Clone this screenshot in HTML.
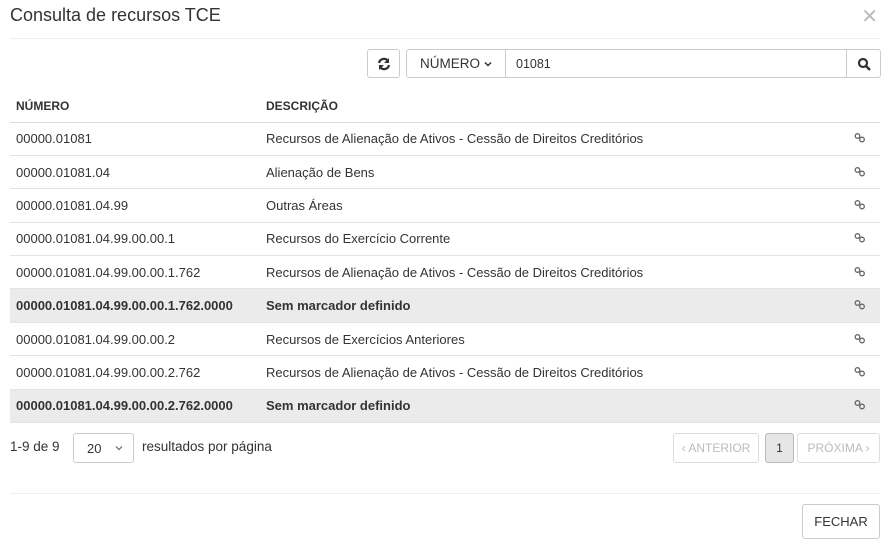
<!DOCTYPE html>
<html><head><meta charset="utf-8"><style>
*{box-sizing:border-box;margin:0;padding:0}
body{width:888px;height:545px;background:#fff;font-family:"Liberation Sans",sans-serif;color:#333;font-size:13px;position:relative;overflow:hidden}
.abs{position:absolute}
.title{left:10px;top:5px;font-size:18px;color:#333}
.close{right:10px;top:4px;font-size:20px;color:#bbb}
.hr{left:10px;right:8px;height:1px;background:#eee}
.btn{border:1px solid #ccc;border-radius:3px;background:#fff;display:flex;align-items:center;justify-content:center}
table{position:absolute;left:10px;top:90px;width:870px;border-collapse:collapse}
th{text-align:left;font-size:12px;font-weight:bold;height:32px;padding-left:6px;border-bottom:1px solid #ddd}
td{height:33.4px;padding-left:6px;border-bottom:1px solid #e4e4e4}
tr.b td{background:#ebebeb;font-weight:bold}
td.i{width:40px;text-align:center;padding-left:0}
</style></head><body>
<div class="abs title">Consulta de recursos TCE</div>
<div class="abs close">✕</div>
<div class="abs hr" style="top:38px"></div>
<div class="abs btn" style="left:367px;top:49px;width:33px;height:29px"><svg width="14" height="14" viewBox="0 0 14 14"><path d="M2 6A5 5 0 0 1 11 4M12 8A5 5 0 0 1 3 10" stroke="#333" stroke-width="2.2" fill="none"/><path d="M12 1v5H7zM2 13V8h5z" fill="#333"/></svg></div>
<div class="abs btn" style="left:406px;top:49px;width:475px;height:29px;justify-content:flex-start">
<div style="width:99px;height:100%;border-right:1px solid #ccc;display:flex;align-items:center;justify-content:center;font-size:13.5px">NÚMERO<svg style="margin-left:4px" width="8" height="6" viewBox="0 0 8 6"><path d="M1 1.5l3 3 3-3" stroke="#333" stroke-width="1.5" fill="none"/></svg></div>
<div style="padding-left:10px;flex:1;font-size:12.5px">01081</div>
<div style="width:34px;height:100%;border-left:1px solid #ccc;display:flex;align-items:center;justify-content:center"><svg width="14" height="14" viewBox="0 0 14 14"><circle cx="6" cy="6" r="4" stroke="#333" stroke-width="2.2" fill="none"/><path d="M9 9l4 4" stroke="#333" stroke-width="2.5"/></svg></div>
</div>
<table>
<tr><th style="width:250px">NÚMERO</th><th>DESCRIÇÃO</th><th></th></tr>
<tr><td>00000.01081</td><td>Recursos de Alienação de Ativos - Cessão de Direitos Creditórios</td><td class="i">L</td></tr>
<tr><td>00000.01081.04</td><td>Alienação de Bens</td><td class="i">L</td></tr>
<tr><td>00000.01081.04.99</td><td>Outras Áreas</td><td class="i">L</td></tr>
<tr><td>00000.01081.04.99.00.00.1</td><td>Recursos do Exercício Corrente</td><td class="i">L</td></tr>
<tr><td>00000.01081.04.99.00.00.1.762</td><td>Recursos de Alienação de Ativos - Cessão de Direitos Creditórios</td><td class="i">L</td></tr>
<tr class="b"><td>00000.01081.04.99.00.00.1.762.0000</td><td>Sem marcador definido</td><td class="i">L</td></tr>
<tr><td>00000.01081.04.99.00.00.2</td><td>Recursos de Exercícios Anteriores</td><td class="i">L</td></tr>
<tr><td>00000.01081.04.99.00.00.2.762</td><td>Recursos de Alienação de Ativos - Cessão de Direitos Creditórios</td><td class="i">L</td></tr>
<tr class="b"><td>00000.01081.04.99.00.00.2.762.0000</td><td>Sem marcador definido</td><td class="i">L</td></tr>
</table>
<script>
document.querySelectorAll('td.i').forEach(function(t){t.innerHTML='<svg width="12" height="10" viewBox="0 0 12 10"><circle cx="3.5" cy="3" r="2.3" stroke="#666" stroke-width="1.3" fill="none"/><circle cx="8" cy="6.5" r="2.3" stroke="#666" stroke-width="1.3" fill="none"/></svg>';});
</script>
<div class="abs" style="left:10px;top:439px;font-size:13.5px">1-9 de 9</div>
<div class="abs btn" style="left:73px;top:433px;width:61px;height:30px;justify-content:space-between;padding:0 10px 0 13px;font-size:13px"><span>20</span><svg width="8" height="6" viewBox="0 0 8 6"><path d="M1 1.5l3 3 3-3" stroke="#666" stroke-width="1.2" fill="none"/></svg></div>
<div class="abs" style="left:142px;top:439px;font-size:13.5px">resultados por página</div>
<div class="abs btn" style="left:673px;top:433px;width:86px;height:30px;color:#bbb;border-color:#ddd;font-size:12px">&lsaquo; ANTERIOR</div>
<div class="abs btn" style="left:765px;top:433px;width:29px;height:30px;background:#e6e6e6;border-color:#bbb;font-size:12px">1</div>
<div class="abs btn" style="left:797px;top:433px;width:83px;height:30px;color:#bbb;border-color:#ddd;font-size:12px">PRÓXIMA &rsaquo;</div>
<div class="abs hr" style="top:493px"></div>
<div class="abs btn" style="left:802px;top:504px;width:78px;height:35px;font-size:13px">FECHAR</div>
</body></html>
